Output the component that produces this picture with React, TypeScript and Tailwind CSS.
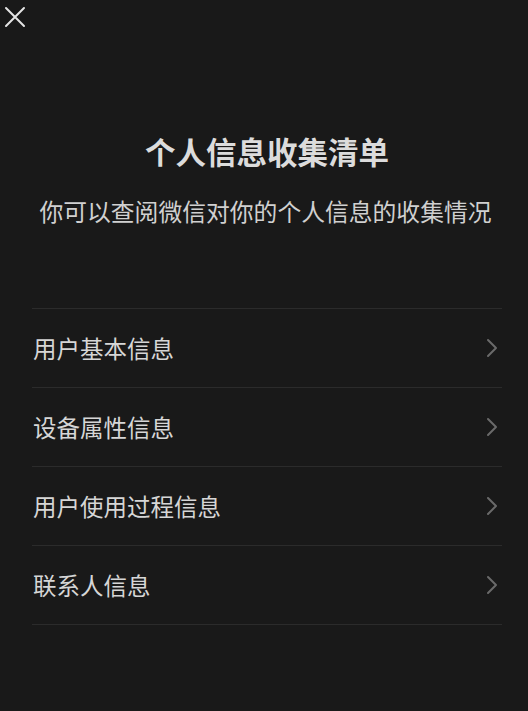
const items = ["用户基本信息", "设备属性信息", "用户使用过程信息", "联系人信息"];

function Chevron() {
  return (
    <svg width="12" height="20" viewBox="0 0 12 20" fill="none">
      <path d="M2 2l8 8-8 8" stroke="#6a6a6a" strokeWidth="2" strokeLinecap="round" strokeLinejoin="round" />
    </svg>
  );
}

export default function App() {
  return (
    <div
      className="flex h-[711px] w-[528px] flex-col overflow-hidden bg-[#191919] text-[#d6d6d6]"
      style={{ fontFamily: '"Noto Sans CJK SC", "Noto Sans", sans-serif' }}
    >
      <div className="flex h-[36px] items-start pl-[4px] pt-[6px]">
        <svg width="22" height="22" viewBox="0 0 22 22" fill="none">
          <path d="M2 2l18 18M20 2L2 20" stroke="#e5e5e5" strokeWidth="2" strokeLinecap="round" />
        </svg>
      </div>

      <h1 className="mt-[95px] pl-[6px] text-center text-[30.5px] font-bold leading-[40px] text-[#dcdcdc]">
        个人信息收集清单
      </h1>
      <p className="mt-[24px] pl-[3px] text-center text-[23.8px] leading-[32px] text-[#d0d0d0]">
        你可以查阅微信对你的个人信息的收集情况
      </p>

      <div className="ml-[32px] mr-[26px] mt-[81px] border-t border-[#2b2b2b]">
        {items.map((item) => (
          <div
            key={item}
            className="flex h-[79px] items-center justify-between border-b border-[#2b2b2b] pl-[1px] pr-[4px]"
          >
            <span className="text-[23.5px] leading-[32px] text-[#d6d6d6]">{item}</span>
            <Chevron />
          </div>
        ))}
      </div>
    </div>
  );
}
